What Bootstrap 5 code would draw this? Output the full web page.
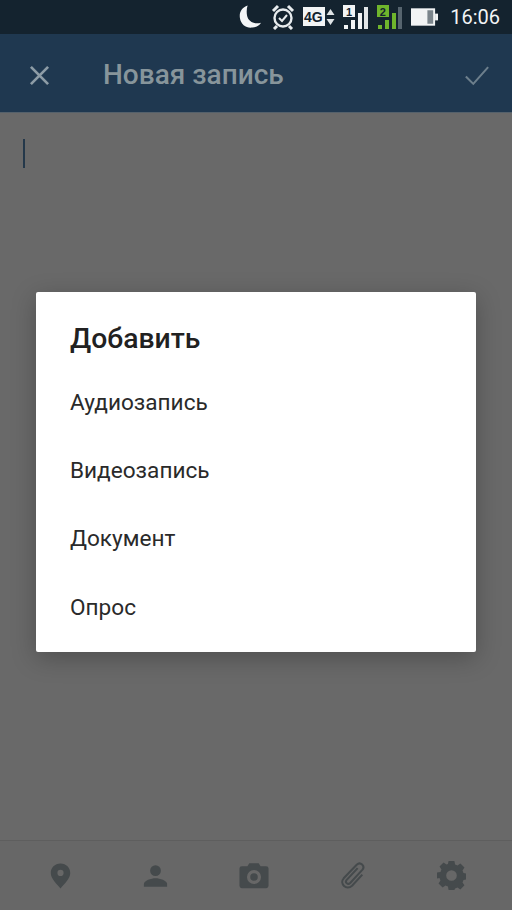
<!DOCTYPE html>
<html lang="ru">
<head>
    <meta charset="UTF-8">
    <meta name="viewport" content="width=device-width, initial-scale=1.0">
    <title>Новая запись</title>
    <link href="https://cdn.jsdelivr.net/npm/bootstrap@5.3.0/dist/css/bootstrap.min.css" rel="stylesheet">
    <style>
        html, body { height: 910px; overflow: hidden; }
        body {
            background-color: #696969;
            font-family: Roboto, "Liberation Sans", sans-serif;
            position: relative;
        }
        .phone-status {
            height: 34px;
            background-color: #14232f;
            color: #f2f4f5;
            padding-right: 12px;
            gap: 8px;
        }
        .status-time { font-size: 20px; margin-left: 4px; line-height: 34px; }
        .app-bar {
            height: 79px;
            background-color: #1f3850;
            border-bottom: 1px solid #55616b;
            padding: 4px 22px 0 29px;
            color: #87959b;
        }
        .app-title { font-size: 28px; font-weight: 500; margin-left: 53px; }
        .editor-area { height: 727px; padding: 26px 0 0 23px; }
        .text-caret { width: 2px; height: 29px; background-color: #24384a; }
        .attach-bar { height: 70px; border-top: 1px solid #5e5e5e; background-color: #676767; padding: 0 46px 0 49px; }
        .attach-bar svg { fill: #454a4c; display: block; }
        .attach-bar svg.clip-icon { fill: none; stroke: #454a4c; stroke-width: 2.200; }
        .dialog-layer { position: absolute; top: 292px; left: 36px; width: 440px; }
        .dialog-box {
            height: 360px;
            background-color: #fff;
            border-radius: 2px;
            box-shadow: 0 6px 24px rgba(0, 0, 0, .25);
            padding: 0 34px;
        }
        .dialog-title { font-size: 28.3px; font-weight: 500; color: #212121; line-height: 34px; padding-top: 30px; height: 77px; margin: 0; }
        .dialog-item { font-size: 22.6px; color: #2a2a2a; height: 68.2px; line-height: 68px; }
    </style>
</head>
<body>
    <div class="phone-status d-flex align-items-center justify-content-end">
        <!-- moon -->
        <svg width="25" height="26" viewBox="0 0 26 26"><path fill="#f4f6f7" d="M10 1 C4 3 1 8 2 14 C3 21 9 25 15 24 C19 23.500 22 22 24 19 C17 21 11 18 9.500 12 C8.700 8 9 4 10 1Z"/></svg>
        <!-- alarm -->
        <svg width="24" height="26" viewBox="0 0 24 26" fill="none" stroke="#e8ecee"><circle cx="12" cy="14" r="8.500" stroke-width="2.400"/><path stroke-width="2" d="M8 14l3 3 5-6"/><path stroke-width="3" d="M2 7l5-5M22 7l-5-5M6 22l-3 3M18 22l3 3"/></svg>
        <!-- 4G -->
        <svg width="32" height="20" viewBox="0 0 32 20"><rect x="0" y="0" width="22" height="19" fill="#f2f4f5"/><text x="1" y="15" font-family="Liberation Sans, sans-serif" font-size="14" font-weight="700" fill="#14232f">4G</text><path fill="#dfe4e6" d="M27.500 2l4 6h-8zM27.500 18l4-6h-8z"/></svg>
        <!-- sim 1 -->
        <svg width="26" height="26" viewBox="0 0 26 26"><rect x="0" y="1" width="12" height="12" fill="#f2f4f5"/><text x="3" y="11.500" font-family="Liberation Sans, sans-serif" font-size="11" font-weight="700" fill="#14232f">1</text><rect x="1" y="21" width="4" height="4" fill="#f2f4f5"/><rect x="8" y="16" width="4" height="9" fill="#f2f4f5"/><rect x="15" y="9" width="4" height="16" fill="#f2f4f5"/><rect x="21" y="3" width="4" height="22" fill="#e2e6e8"/></svg>
        <!-- sim 2 -->
        <svg width="26" height="26" viewBox="0 0 26 26"><rect x="0" y="1" width="12" height="12" fill="#6fb52c"/><text x="2.800" y="11.500" font-family="Liberation Sans, sans-serif" font-size="11" font-weight="700" fill="#14232f">2</text><rect x="1" y="21" width="4" height="4" fill="#6fb52c"/><rect x="8" y="16" width="4" height="9" fill="#6fb52c"/><rect x="15" y="9" width="4" height="16" fill="#6fb52c"/><rect x="21" y="3" width="4" height="22" fill="#56646e"/></svg>
        <!-- battery -->
        <svg width="27" height="18" viewBox="0 0 28 18"><rect x="0" y="0" width="25" height="18" fill="#f2f4f5"/><rect x="17" y="2" width="6" height="14" fill="#7b858c"/><rect x="25" y="5.500" width="3" height="7" fill="#f2f4f5"/></svg>
        <span class="status-time">16:06</span>
    </div>

    <div class="app-bar d-flex align-items-center">
        <svg width="21" height="21" viewBox="0 0 22 22" stroke="#8d9ca6" stroke-width="2.800" fill="none"><path d="M2 2l18 18M20 2L2 20"/></svg>
        <span class="app-title">Новая запись</span>
        <svg class="ms-auto" width="26" height="21" viewBox="0 0 28 22" stroke="#6d7f8c" stroke-width="2.200" fill="none"><path d="M2 12l8 8L26 2"/></svg>
    </div>

    <div class="editor-area">
        <div class="text-caret"></div>
    </div>

    <div class="attach-bar d-flex align-items-center justify-content-between">
        <svg width="23" height="28" viewBox="0 0 26 30"><path fill-rule="evenodd" d="M13 1C6.500 1 2 6 2 11.500 2 18 9 24 13 29 17 24 24 18 24 11.500 24 6 19.500 1 13 1ZM13 8a3.500 3.500 0 1 1 0 7 3.500 3.500 0 0 1 0-7Z"/></svg>
        <svg width="25" height="24" viewBox="0 0 28 26"><circle cx="14" cy="7" r="6"/><path d="M1 25v-3c0-4 8-6.500 13-6.500S27 18 27 22v3Z"/></svg>
        <svg width="30" height="27" viewBox="0 0 32 28"><path fill-rule="evenodd" d="M11 1h10l2 3h6a2.500 2.500 0 0 1 2.500 2.500V25a2.500 2.500 0 0 1-2.500 2.500H3A2.500 2.500 0 0 1 .5 25V6.500A2.500 2.500 0 0 1 3 4h6ZM16 8a7.500 7.500 0 1 0 0 15 7.500 7.500 0 0 0 0-15ZM16 11.500a4 4 0 1 1 0 8 4 4 0 0 1 0-8Z"/></svg>
        <svg class="clip-icon" width="26" height="29" viewBox="0 0 28 30"><path d="M19 7L7 20c-2 2.500 1.500 5.500 4 3L24 9c3.500-4-2-9.500-6-5.500L4 18c-5 6 3 13.500 9 8l11-12"/></svg>
        <svg width="29" height="29" viewBox="0 0 30 30"><path fill-rule="evenodd" d="M12 0h6l.7 3.600 2.500 1 3-2 4.200 4.200-2 3 1 2.500 3.600.7v6l-3.600.7-1 2.500 2 3-4.200 4.200-3-2-2.500 1L18 30h-6l-.7-3.600-2.500-1-3 2-4.200-4.200 2-3-1-2.500L0 18v-6l3.600-.7 1-2.500-2-3L6.800 1.600l3 2 1.500-.6ZM15 9.500a5.500 5.500 0 1 0 0 11 5.500 5.500 0 0 0 0-11Z"/></svg>
    </div>

    <div class="dialog-layer">
        <div class="dialog-box">
            <h5 class="dialog-title">Добавить</h5>
            <div class="dialog-item">Аудиозапись</div>
            <div class="dialog-item">Видеозапись</div>
            <div class="dialog-item">Документ</div>
            <div class="dialog-item">Опрос</div>
        </div>
    </div>

    <script src="https://cdn.jsdelivr.net/npm/bootstrap@5.3.0/dist/js/bootstrap.bundle.min.js"></script>
</body>
</html>
